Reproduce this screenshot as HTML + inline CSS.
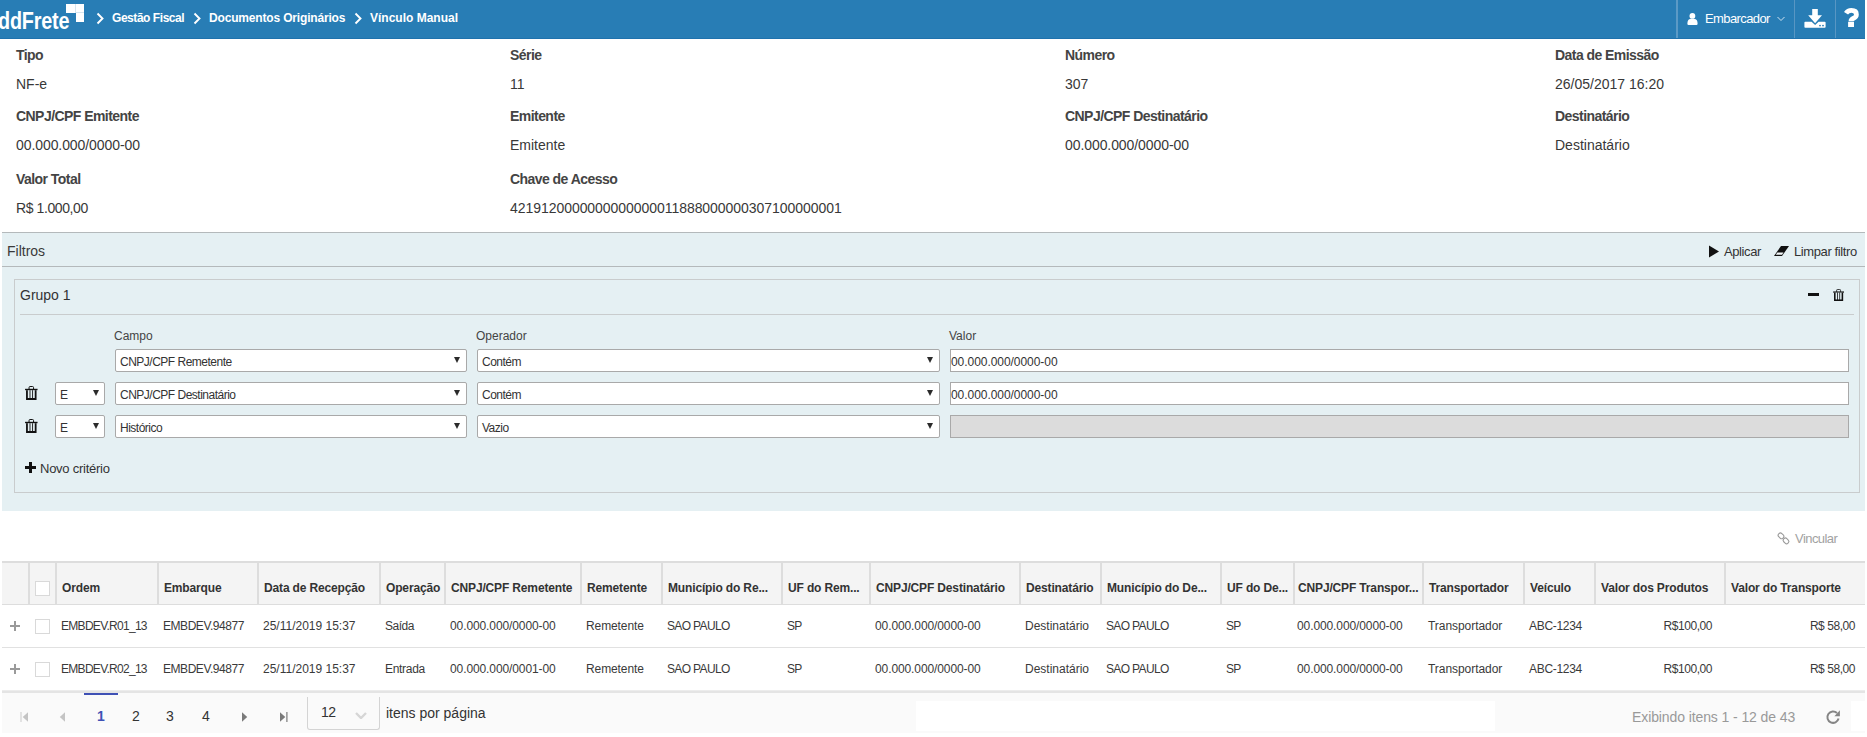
<!DOCTYPE html>
<html><head><meta charset="utf-8">
<style>
*{box-sizing:border-box;margin:0;padding:0}
html,body{width:1867px;height:737px;overflow:hidden;background:#fff;font-family:"Liberation Sans",sans-serif;color:#333}
.a{position:absolute;white-space:nowrap;line-height:1}
#hdr{position:absolute;left:0;top:0;width:1865px;height:39px;background:#287db5;border-bottom:1px solid #1f72ad}
.bc{font-weight:bold;font-size:12px;color:#fff;letter-spacing:-0.45px}
.lbl{font-weight:bold;font-size:14px;letter-spacing:-0.55px;color:#444}
.val{font-size:14px;color:#383838}
#flt{position:absolute;left:2px;top:232px;width:1863px;height:279px;background:#e5f0f3;border-top:1px solid #b4b9bb}
#flth{position:absolute;left:0;top:0;width:100%;height:34px;border-bottom:1px solid #b4b9bb}
#grp{position:absolute;left:12px;top:46px;width:1846px;height:214px;border:1px solid #c9cccd}
.sel{position:absolute;height:23px;background:#fff;border:1px solid #a9a9a9;border-radius:2px}
.sel .t{position:absolute;left:4px;top:6px;font-size:12px;letter-spacing:-0.5px;line-height:1;color:#333;white-space:nowrap}
.tri{position:absolute;top:7px;width:0;height:0;border-left:3px solid transparent;border-right:3px solid transparent;border-top:6px solid #2b2b2b}
.flab{font-size:12px;color:#444;margin-left:-1px}
#grid{position:absolute;left:2px;top:561px;width:1863px;height:172px}
.gh{position:absolute;top:0;height:43px;background:#f4f4f4;border-top:2px solid #ddd;border-bottom:1px solid #ddd;border-left:2px solid #ddd}
.ght{font-weight:bold;font-size:12px;letter-spacing:-0.15px;color:#333}
.gd{font-size:12px;letter-spacing:-0.2px;color:#3a3a3a}
.cb{position:absolute;width:15px;height:15px;border:1px solid #d9d9d9;background:#fff}
</style></head><body>

<!-- HEADER -->
<div id="hdr">
  <div class="a" style="left:-2px;top:10px;font-size:23px;font-weight:bold;color:#fff;letter-spacing:-0.2px;transform:scaleX(0.86);transform-origin:0 0">ddFrete</div>
  <div style="position:absolute;left:66px;top:4px;width:9px;height:9px;background:#fff"></div>
  <div style="position:absolute;left:75px;top:4px;width:1px;height:9px;background:#d6e5ef"></div>
  <div style="position:absolute;left:76px;top:4px;width:8px;height:18px;background:#fff"></div>
  <div style="position:absolute;left:76px;top:12px;width:8px;height:1px;background:#d6e5ef"></div>
  <svg style="position:absolute;left:96px;top:12px" width="9" height="13" viewBox="0 0 9 13"><path d="M1.5 1.5 L6.5 6.5 L1.5 11.5" stroke="#fff" stroke-width="1.9" fill="none"/></svg>
  <div class="a bc" style="left:112px;top:12px">Gestão Fiscal</div>
  <svg style="position:absolute;left:193px;top:12px" width="9" height="13" viewBox="0 0 9 13"><path d="M1.5 1.5 L6.5 6.5 L1.5 11.5" stroke="#fff" stroke-width="1.9" fill="none"/></svg>
  <div class="a bc" style="left:209px;top:12px;letter-spacing:-0.17px">Documentos Originários</div>
  <svg style="position:absolute;left:354px;top:12px" width="9" height="13" viewBox="0 0 9 13"><path d="M1.5 1.5 L6.5 6.5 L1.5 11.5" stroke="#fff" stroke-width="1.9" fill="none"/></svg>
  <div class="a bc" style="left:370px;top:12px;letter-spacing:0px">Vínculo Manual</div>

  <div style="position:absolute;left:1676px;top:0;width:2px;height:38px;background:#5b9ac6"></div>
  <svg style="position:absolute;left:1687px;top:13px" width="11" height="12" viewBox="0 0 11 12"><circle cx="5.4" cy="2.9" r="2.9" fill="#fff"/><path d="M1.5 12 Q0.4 12 0.4 10.8 Q0.4 6 3.5 5.9 H7.4 Q10.6 6 10.6 10.8 Q10.6 12 9.5 12 Z" fill="#fff"/></svg>
  <div class="a" style="left:1705px;top:12px;font-size:13px;color:#fff;letter-spacing:-0.6px">Embarcador</div>
  <svg style="position:absolute;left:1777px;top:16px" width="8" height="6" viewBox="0 0 8 6"><path d="M0.5 1 L4 4.5 L7.5 1" stroke="#cfe2f0" stroke-width="1" fill="none"/></svg>
  <div style="position:absolute;left:1794px;top:0;width:1px;height:38px;background:#5896c3"></div>
  <svg style="position:absolute;left:1804px;top:8px" width="22" height="21" viewBox="0 0 22 21"><path d="M8.2 1 H13.8 V7.3 H18 L11.1 15.3 L4.2 7.3 H8.2 Z" fill="#fff"/><path d="M1.3 13.7 H7.6 L11.1 16.9 L14.6 13.7 H20.7 Q21.6 13.7 21.6 14.6 V19 Q21.6 19.8 20.7 19.8 H1.3 Q0.4 19.8 0.4 19 V14.6 Q0.4 13.7 1.3 13.7 Z" fill="#fff"/><rect x="15.2" y="16.9" width="1.6" height="1.4" fill="#287db5"/><rect x="18.2" y="16.9" width="1.6" height="1.4" fill="#287db5"/></svg>
  <div style="position:absolute;left:1835px;top:0;width:1px;height:38px;background:#5896c3"></div>
  <svg style="position:absolute;left:1844px;top:8px" width="16" height="20" viewBox="0 0 16 20"><path d="M2 5.3 Q3.8 2.4 7.4 2.4 Q12.4 2.4 12.4 6.4 Q12.4 8.9 9.6 10.2 Q7 11.4 7 13.2" stroke="#fff" stroke-width="4.8" fill="none"/><rect x="4.1" y="13.8" width="5.9" height="5.2" fill="#fff"/></svg>
</div>

<!-- INFO -->
<div class="a lbl" style="left:16px;top:48px">Tipo</div>
<div class="a val" style="left:16px;top:77px">NF-e</div>
<div class="a lbl" style="left:16px;top:109px">CNPJ/CPF Emitente</div>
<div class="a val" style="left:16px;top:138px;letter-spacing:-0.08px">00.000.000/0000-00</div>
<div class="a lbl" style="left:16px;top:172px">Valor Total</div>
<div class="a val" style="left:16px;top:201px;letter-spacing:-0.4px">R$ 1.000,00</div>

<div class="a lbl" style="left:510px;top:48px">Série</div>
<div class="a val" style="left:510px;top:77px">11</div>
<div class="a lbl" style="left:510px;top:109px">Emitente</div>
<div class="a val" style="left:510px;top:138px">Emitente</div>
<div class="a lbl" style="left:510px;top:172px">Chave de Acesso</div>
<div class="a val" style="left:510px;top:201px;letter-spacing:-0.05px">4219120000000000000011888000000307100000001</div>

<div class="a lbl" style="left:1065px;top:48px">Número</div>
<div class="a val" style="left:1065px;top:77px">307</div>
<div class="a lbl" style="left:1065px;top:109px">CNPJ/CPF Destinatário</div>
<div class="a val" style="left:1065px;top:138px;letter-spacing:-0.08px">00.000.000/0000-00</div>

<div class="a lbl" style="left:1555px;top:48px">Data de Emissão</div>
<div class="a val" style="left:1555px;top:77px">26/05/2017 16:20</div>
<div class="a lbl" style="left:1555px;top:109px">Destinatário</div>
<div class="a val" style="left:1555px;top:138px">Destinatário</div>

<!-- FILTERS -->
<div id="flt">
  <div id="flth">
    <div class="a" style="left:5px;top:11px;font-size:14px;color:#3a3a3a">Filtros</div>
    <svg style="position:absolute;left:1706px;top:12px" width="12" height="13" viewBox="0 0 12 13"><path d="M1 0.5 L11 6.5 L1 12.5 Z" fill="#111"/></svg>
    <div class="a" style="left:1722px;top:12px;font-size:13px;letter-spacing:-0.4px;color:#333">Aplicar</div>
    <svg style="position:absolute;left:1771px;top:12px" width="17" height="12" viewBox="0 0 17 12"><path d="M8 1 L16 1 L9 11 L1 11 Z" fill="#111"/><path d="M4.4 7.5 L10.5 7.5 L9.0 9.8 L2.8 9.8 Z" fill="#f4f8f9"/></svg>
    <div class="a" style="left:1792px;top:12px;font-size:13px;letter-spacing:-0.4px;color:#333">Limpar filtro</div>
  </div>
  <div id="grp">
    <div class="a" style="left:5px;top:8px;font-size:14px;color:#333">Grupo 1</div>
    <div style="position:absolute;left:5px;top:34px;width:1834px;height:1px;background:#c9cccd"></div>
    <div style="position:absolute;left:1793px;top:13px;width:11px;height:3px;background:#111"></div>
    <svg style="position:absolute;left:1818px;top:9px" width="11.2" height="12.2" viewBox="0 0 25 28"><path d="M8 6.5 V3.2 Q8 1 10 1 H15 Q17 1 17 3.2 V6.5" stroke="#111" stroke-width="2" fill="none"/><rect x="0" y="5.6" width="25" height="2.8" fill="#111"/><rect x="2" y="8.4" width="21" height="19.6" fill="#111"/><rect x="5.6" y="8.4" width="3.4" height="15.6" fill="#e5f0f3"/><rect x="10.8" y="8.4" width="3.4" height="15.6" fill="#e5f0f3"/><rect x="16" y="8.4" width="3.4" height="15.6" fill="#e5f0f3"/></svg>

    <div class="a flab" style="left:100px;top:50px">Campo</div>
    <div class="a flab" style="left:462px;top:50px">Operador</div>
    <div class="a flab" style="left:935px;top:50px">Valor</div>

    <!-- row 1 -->
    <div class="sel" style="left:100px;top:69px;width:352px"><div class="t">CNPJ/CPF Remetente</div><div class="tri" style="left:338px"></div></div>
    <div class="sel" style="left:462px;top:69px;width:463px"><div class="t">Contém</div><div class="tri" style="left:449px"></div></div>
    <div class="sel" style="left:935px;top:69px;width:899px;border-radius:0"><div class="t" style="left:0px;letter-spacing:-0.05px">00.000.000/0000-00</div></div>
    <!-- row 2 -->
    <svg style="position:absolute;left:10px;top:106px" width="12.6" height="14" viewBox="0 0 25 28"><path d="M8 6.5 V3.2 Q8 1 10 1 H15 Q17 1 17 3.2 V6.5" stroke="#111" stroke-width="2" fill="none"/><rect x="0" y="5.6" width="25" height="2.8" fill="#111"/><rect x="2" y="8.4" width="21" height="19.6" fill="#111"/><rect x="5.6" y="8.4" width="3.4" height="15.6" fill="#e5f0f3"/><rect x="10.8" y="8.4" width="3.4" height="15.6" fill="#e5f0f3"/><rect x="16" y="8.4" width="3.4" height="15.6" fill="#e5f0f3"/></svg>
    <div class="sel" style="left:40px;top:102px;width:50px"><div class="t">E</div><div class="tri" style="left:37px"></div></div>
    <div class="sel" style="left:100px;top:102px;width:352px"><div class="t">CNPJ/CPF Destinatário</div><div class="tri" style="left:338px"></div></div>
    <div class="sel" style="left:462px;top:102px;width:463px"><div class="t">Contém</div><div class="tri" style="left:449px"></div></div>
    <div class="sel" style="left:935px;top:102px;width:899px;border-radius:0"><div class="t" style="left:0px;letter-spacing:-0.05px">00.000.000/0000-00</div></div>
    <!-- row 3 -->
    <svg style="position:absolute;left:10px;top:139px" width="12.6" height="14" viewBox="0 0 25 28"><path d="M8 6.5 V3.2 Q8 1 10 1 H15 Q17 1 17 3.2 V6.5" stroke="#111" stroke-width="2" fill="none"/><rect x="0" y="5.6" width="25" height="2.8" fill="#111"/><rect x="2" y="8.4" width="21" height="19.6" fill="#111"/><rect x="5.6" y="8.4" width="3.4" height="15.6" fill="#e5f0f3"/><rect x="10.8" y="8.4" width="3.4" height="15.6" fill="#e5f0f3"/><rect x="16" y="8.4" width="3.4" height="15.6" fill="#e5f0f3"/></svg>
    <div class="sel" style="left:40px;top:135px;width:50px"><div class="t">E</div><div class="tri" style="left:37px"></div></div>
    <div class="sel" style="left:100px;top:135px;width:352px"><div class="t">Histórico</div><div class="tri" style="left:338px"></div></div>
    <div class="sel" style="left:462px;top:135px;width:463px"><div class="t">Vazio</div><div class="tri" style="left:449px"></div></div>
    <div class="sel" style="left:935px;top:135px;width:899px;border-radius:0;background:#dcdcdc"></div>

    <svg style="position:absolute;left:10px;top:182px" width="11" height="11" viewBox="0 0 11 11"><rect x="4" y="0" width="3" height="11" fill="#111"/><rect x="0" y="4" width="11" height="3" fill="#111"/></svg>
    <div class="a" style="left:25px;top:182px;font-size:13px;letter-spacing:-0.25px;color:#333">Novo critério</div>
  </div>
</div>

<!-- GRID -->
<div style="position:absolute;left:2px;top:561px;width:1863px;height:44px;background:#f4f4f4;border-top:2px solid #ddd;border-bottom:1px solid #ddd"></div>
<div style="position:absolute;left:28px;top:563px;width:2px;height:41px;background:#ddd"></div>
<div style="position:absolute;left:55px;top:563px;width:2px;height:41px;background:#ddd"></div>
<div style="position:absolute;left:157px;top:563px;width:2px;height:41px;background:#ddd"></div>
<div style="position:absolute;left:257px;top:563px;width:2px;height:41px;background:#ddd"></div>
<div style="position:absolute;left:379px;top:563px;width:2px;height:41px;background:#ddd"></div>
<div style="position:absolute;left:444px;top:563px;width:2px;height:41px;background:#ddd"></div>
<div style="position:absolute;left:580px;top:563px;width:2px;height:41px;background:#ddd"></div>
<div style="position:absolute;left:661px;top:563px;width:2px;height:41px;background:#ddd"></div>
<div style="position:absolute;left:781px;top:563px;width:2px;height:41px;background:#ddd"></div>
<div style="position:absolute;left:869px;top:563px;width:2px;height:41px;background:#ddd"></div>
<div style="position:absolute;left:1019px;top:563px;width:2px;height:41px;background:#ddd"></div>
<div style="position:absolute;left:1100px;top:563px;width:2px;height:41px;background:#ddd"></div>
<div style="position:absolute;left:1220px;top:563px;width:2px;height:41px;background:#ddd"></div>
<div style="position:absolute;left:1293px;top:563px;width:2px;height:41px;background:#ddd"></div>
<div style="position:absolute;left:1422px;top:563px;width:2px;height:41px;background:#ddd"></div>
<div style="position:absolute;left:1523px;top:563px;width:2px;height:41px;background:#ddd"></div>
<div style="position:absolute;left:1594px;top:563px;width:2px;height:41px;background:#ddd"></div>
<div style="position:absolute;left:1724px;top:563px;width:2px;height:41px;background:#ddd"></div>
<div class="a ght" style="left:62px;top:582px">Ordem</div>
<div class="a ght" style="left:164px;top:582px">Embarque</div>
<div class="a ght" style="left:264px;top:582px">Data de Recepção</div>
<div class="a ght" style="left:386px;top:582px">Operação</div>
<div class="a ght" style="left:451px;top:582px">CNPJ/CPF Remetente</div>
<div class="a ght" style="left:587px;top:582px">Remetente</div>
<div class="a ght" style="left:668px;top:582px">Município do Re...</div>
<div class="a ght" style="left:788px;top:582px">UF do Rem...</div>
<div class="a ght" style="left:876px;top:582px">CNPJ/CPF Destinatário</div>
<div class="a ght" style="left:1026px;top:582px">Destinatário</div>
<div class="a ght" style="left:1107px;top:582px">Município do De...</div>
<div class="a ght" style="left:1227px;top:582px">UF do De...</div>
<div class="a ght" style="left:1298px;top:582px">CNPJ/CPF Transpor...</div>
<div class="a ght" style="left:1429px;top:582px">Transportador</div>
<div class="a ght" style="left:1530px;top:582px">Veículo</div>
<div class="a ght" style="left:1601px;top:582px">Valor dos Produtos</div>
<div class="a ght" style="left:1731px;top:582px">Valor do Transporte</div>
<div class="cb" style="left:35px;top:581px"></div>
<div style="position:absolute;left:2px;top:647px;width:1863px;height:1px;background:#e1e1e1"></div>
<svg style="position:absolute;left:10px;top:621px" width="10" height="10" viewBox="0 0 10 10"><rect x="4" y="0" width="2" height="10" fill="#9a9a9a"/><rect x="0" y="4" width="10" height="2" fill="#9a9a9a"/></svg>
<div class="cb" style="left:35px;top:619px"></div>
<div class="a gd" style="left:61px;top:620px;letter-spacing:-0.7px">EMBDEV.R01_13</div>
<div class="a gd" style="left:163px;top:620px;letter-spacing:-0.45px">EMBDEV.94877</div>
<div class="a gd" style="left:263px;top:620px;letter-spacing:0px">25/11/2019 15:37</div>
<div class="a gd" style="left:385px;top:620px;letter-spacing:-0.5px">Saída</div>
<div class="a gd" style="left:450px;top:620px;letter-spacing:-0.1px">00.000.000/0000-00</div>
<div class="a gd" style="left:586px;top:620px;letter-spacing:-0.1px">Remetente</div>
<div class="a gd" style="left:667px;top:620px;letter-spacing:-0.65px">SAO PAULO</div>
<div class="a gd" style="left:787px;top:620px;letter-spacing:-0.8px">SP</div>
<div class="a gd" style="left:875px;top:620px;letter-spacing:-0.1px">00.000.000/0000-00</div>
<div class="a gd" style="left:1025px;top:620px;letter-spacing:0px">Destinatário</div>
<div class="a gd" style="left:1106px;top:620px;letter-spacing:-0.65px">SAO PAULO</div>
<div class="a gd" style="left:1226px;top:620px;letter-spacing:-0.8px">SP</div>
<div class="a gd" style="left:1297px;top:620px;letter-spacing:-0.1px">00.000.000/0000-00</div>
<div class="a gd" style="left:1428px;top:620px;letter-spacing:-0.05px">Transportador</div>
<div class="a gd" style="left:1529px;top:620px;letter-spacing:-0.3px">ABC-1234</div>
<div class="a gd" style="right:155px;top:620px;letter-spacing:-0.45px">R$100,00</div>
<div class="a gd" style="right:12px;top:620px;letter-spacing:-0.45px">R$ 58,00</div>
<div style="position:absolute;left:2px;top:690px;width:1863px;height:1px;background:#e1e1e1"></div>
<svg style="position:absolute;left:10px;top:664px" width="10" height="10" viewBox="0 0 10 10"><rect x="4" y="0" width="2" height="10" fill="#9a9a9a"/><rect x="0" y="4" width="10" height="2" fill="#9a9a9a"/></svg>
<div class="cb" style="left:35px;top:662px"></div>
<div class="a gd" style="left:61px;top:663px;letter-spacing:-0.7px">EMBDEV.R02_13</div>
<div class="a gd" style="left:163px;top:663px;letter-spacing:-0.45px">EMBDEV.94877</div>
<div class="a gd" style="left:263px;top:663px;letter-spacing:0px">25/11/2019 15:37</div>
<div class="a gd" style="left:385px;top:663px;letter-spacing:-0.3px">Entrada</div>
<div class="a gd" style="left:450px;top:663px;letter-spacing:-0.1px">00.000.000/0001-00</div>
<div class="a gd" style="left:586px;top:663px;letter-spacing:-0.1px">Remetente</div>
<div class="a gd" style="left:667px;top:663px;letter-spacing:-0.65px">SAO PAULO</div>
<div class="a gd" style="left:787px;top:663px;letter-spacing:-0.8px">SP</div>
<div class="a gd" style="left:875px;top:663px;letter-spacing:-0.1px">00.000.000/0000-00</div>
<div class="a gd" style="left:1025px;top:663px;letter-spacing:0px">Destinatário</div>
<div class="a gd" style="left:1106px;top:663px;letter-spacing:-0.65px">SAO PAULO</div>
<div class="a gd" style="left:1226px;top:663px;letter-spacing:-0.8px">SP</div>
<div class="a gd" style="left:1297px;top:663px;letter-spacing:-0.1px">00.000.000/0000-00</div>
<div class="a gd" style="left:1428px;top:663px;letter-spacing:-0.05px">Transportador</div>
<div class="a gd" style="left:1529px;top:663px;letter-spacing:-0.3px">ABC-1234</div>
<div class="a gd" style="right:155px;top:663px;letter-spacing:-0.45px">R$100,00</div>
<div class="a gd" style="right:12px;top:663px;letter-spacing:-0.45px">R$ 58,00</div>

<div style="position:absolute;left:2px;top:690px;width:1863px;height:1px;background:#ececec"></div><div style="position:absolute;left:2px;top:691px;width:1863px;height:2px;background:#e4e4e4"></div>
<div style="position:absolute;left:2px;top:693px;width:1863px;height:40px;background:#fafafa"></div>
<div style="position:absolute;left:84px;top:693px;width:34px;height:2px;background:#3f51b5"></div>
<svg style="position:absolute;left:20px;top:712px" width="9" height="10" viewBox="0 0 9 10"><rect x="0.5" y="0" width="1" height="10" fill="#cacaca"/><path d="M8 0.3 V9.7 L2.7 5 Z" fill="#c4c4c4"/></svg>
<svg style="position:absolute;left:59px;top:712px" width="7" height="10" viewBox="0 0 7 10"><path d="M6 0.3 V9.7 L0.8 5 Z" fill="#c4c4c4"/></svg>
<div class="a" style="left:97px;top:709px;font-size:14px;font-weight:bold;color:#3f51b5">1</div>
<div class="a" style="left:132px;top:709px;font-size:14px;color:#333">2</div>
<div class="a" style="left:166px;top:709px;font-size:14px;color:#333">3</div>
<div class="a" style="left:202px;top:709px;font-size:14px;color:#333">4</div>
<svg style="position:absolute;left:241px;top:712px" width="7" height="10" viewBox="0 0 7 10"><path d="M1 0.3 V9.7 L6.2 5 Z" fill="#7a7a7a"/></svg>
<svg style="position:absolute;left:279px;top:712px" width="9" height="10" viewBox="0 0 9 10"><path d="M1 0.3 V9.7 L6.3 5 Z" fill="#7a7a7a"/><rect x="7.3" y="0" width="1.2" height="10" fill="#7a7a7a"/></svg>
<div style="position:absolute;left:307px;top:697px;width:73px;height:33px;border:1px solid #d4d4d4;border-top:none;border-radius:0 0 3px 3px"></div>
<div class="a" style="left:321px;top:705px;font-size:14px;letter-spacing:-0.5px;color:#333">12</div>
<svg style="position:absolute;left:355px;top:712px" width="12" height="7" viewBox="0 0 12 7"><path d="M1 1 L6 6 L11 1" stroke="#d6d6d6" stroke-width="2.4" fill="none"/></svg>
<div class="a" style="left:386px;top:706px;font-size:14px;color:#333">itens por página</div>
<div style="position:absolute;left:916px;top:701px;width:579px;height:30px;background:#fff"></div>
<div class="a" style="left:1632px;top:710px;font-size:14px;letter-spacing:-0.1px;color:#999">Exibindo itens 1 - 12 de 43</div>
<svg style="position:absolute;left:1825px;top:709px" width="16" height="16" viewBox="0 0 16 16"><path d="M12 4 A5.7 5.7 0 1 0 13.6 9.6" stroke="#858585" stroke-width="2" fill="none"/><path d="M9.4 7.2 L14.9 7.2 L14.9 1.2 Z" fill="#858585"/></svg>
<div style="position:absolute;left:1851px;top:701px;width:14px;height:30px;background:#fff"></div>

<svg style="position:absolute;left:1776px;top:531px" width="15" height="15" viewBox="0 0 15 15"><rect x="2" y="2.6" width="6" height="4.4" rx="2" transform="rotate(45 5 4.8)" stroke="#9a9a9a" stroke-width="1.1" fill="none"/><rect x="7" y="7.7" width="6" height="4.4" rx="2" transform="rotate(45 10 9.9)" stroke="#9a9a9a" stroke-width="1.1" fill="none"/></svg>
<div class="a" style="left:1795px;top:532px;font-size:13px;letter-spacing:-0.55px;color:#a2a2a2">Vincular</div>


</body></html>
